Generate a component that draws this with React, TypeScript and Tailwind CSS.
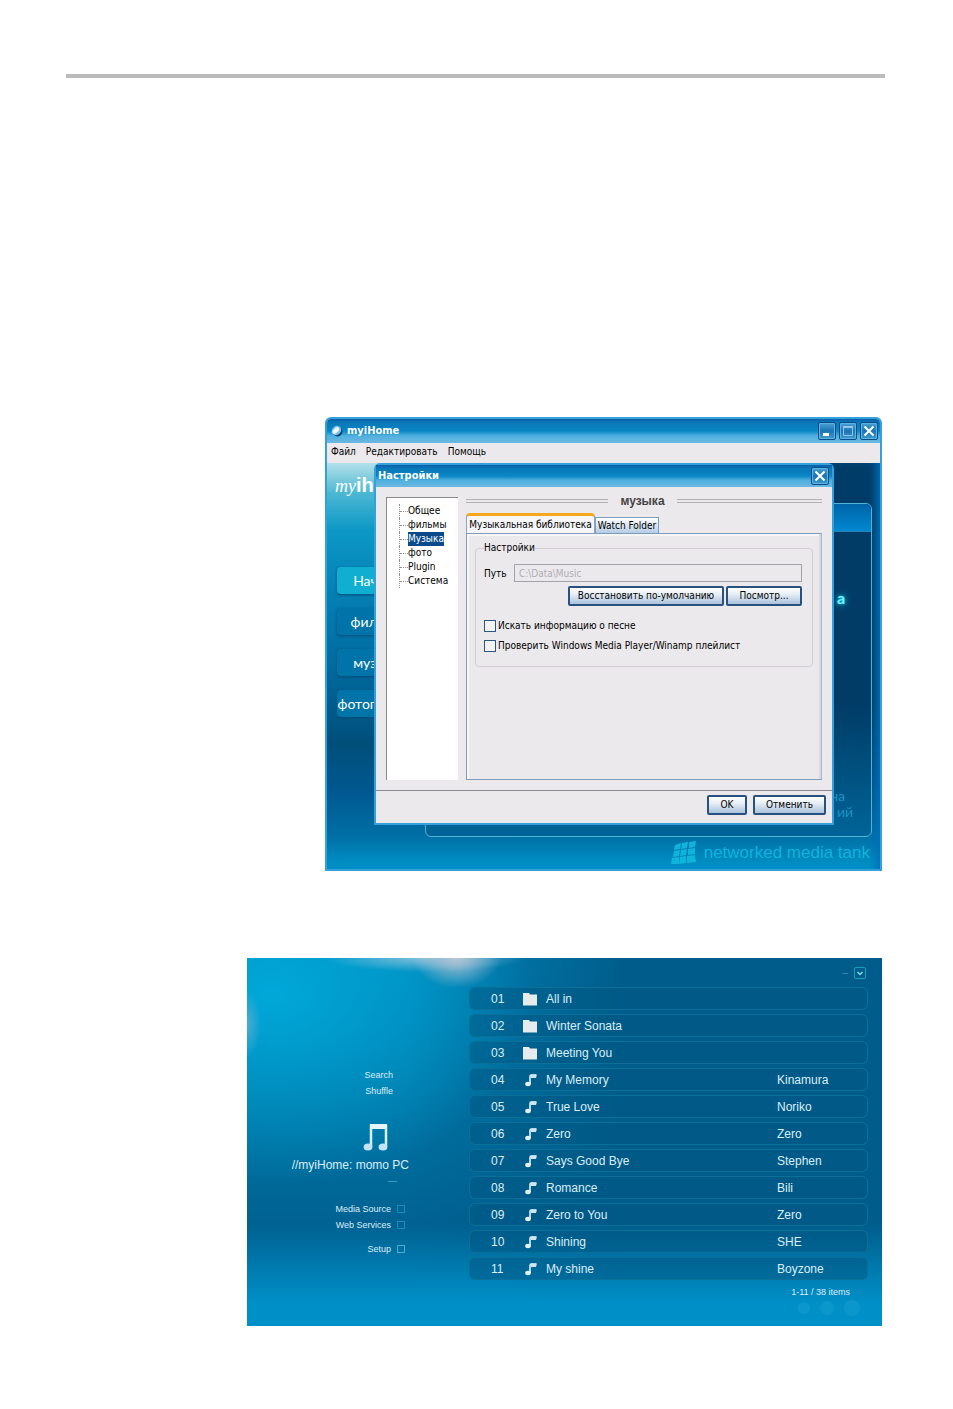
import React from 'react';

interface Track {
  no: string;
  title: string;
  artist?: string;
}

const tracks: Track[] = [
  { no: '01', title: 'All in' },
  { no: '02', title: 'Winter Sonata' },
  { no: '03', title: 'Meeting You' },
  { no: '04', title: 'My Memory', artist: 'Kinamura' },
  { no: '05', title: 'True Love', artist: 'Noriko' },
  { no: '06', title: 'Zero', artist: 'Zero' },
  { no: '07', title: 'Says Good Bye', artist: 'Stephen' },
  { no: '08', title: 'Romance', artist: 'Bili' },
  { no: '09', title: 'Zero to You', artist: 'Zero' },
  { no: '10', title: 'Shining', artist: 'SHE' },
  { no: '11', title: 'My shine', artist: 'Boyzone' },
];

const treeItems = ['Общее', 'фильмы', 'Музыка', 'фото', 'Plugin', 'Система'];
const navItems = ['Начало', 'фильмы', 'музыка', 'фотографии'];

const uiFont = "font-['DejaVu_Sans_Condensed','DejaVu_Sans',sans-serif]";
const titleBar =
  'flex items-center bg-[linear-gradient(#0a5fa8,#0a78b8_15%,#0a86c4_50%,#4fb0de_70%,#6cb8e2)] text-white font-bold';
const captionButton =
  'flex w-[18px] h-[18px] items-center justify-center rounded-xs border border-[#0b4c88] bg-[linear-gradient(#4aa2d4,#1c74b4_50%,#3f9bd0)] shadow-[inset_0_0_0_1px_#5cb4e2]';
const pushButton =
  'h-5 rounded-xs border-2 border-[#29517f] bg-[linear-gradient(#ffffff,#e6edf5_40%,#a9c2dc)] text-[10px] leading-3 text-black whitespace-nowrap';
const checkbox = 'appearance-none w-3 h-3 border border-[#2a5880] bg-[#f3f3f3]';

const MinimizeIcon = () => (
  <svg viewBox="0 0 12 12" className="w-3 h-3">
    <path d="M2 8h6v3H2z" fill="#fff" />
  </svg>
);

const MaximizeIcon = () => (
  <svg viewBox="0 0 12 12" className="w-3 h-3">
    <path d="M1.5 2.5h9v8h-9z" fill="none" stroke="#8fc6ea" />
    <path d="M1 1h10v2H1z" fill="#8fc6ea" />
  </svg>
);

const CloseIcon = () => (
  <svg viewBox="0 0 12 12" className="w-3 h-3">
    <path d="M1.5 1.5l9 9M10.5 1.5l-9 9" stroke="#fff" strokeWidth="2" />
  </svg>
);

const AppIcon = () => (
  <svg viewBox="0 0 12 12" className="w-3 h-3">
    <ellipse cx="6.500" cy="6.500" rx="5" ry="5" fill="#0c3f70" />
    <ellipse cx="5.500" cy="5.500" rx="5" ry="4.400" fill="#7fc3e8" transform="rotate(-40 5.500 5.500)" />
    <ellipse cx="4.800" cy="5.500" rx="4" ry="2.200" fill="#eef9ff" transform="rotate(-45 4.800 5.500)" />
  </svg>
);

const FolderIcon = () => (
  <svg viewBox="0 0 16 14" className="w-4 h-3.5">
    <path d="M1 1h6l1 1.500h7v11H1z" fill="#e6ebee" />
  </svg>
);

const NoteIcon = () => (
  <svg viewBox="0 0 16 14" className="w-4 h-3.5">
    <path d="M8 11V3.500q0-1.500 1.500-1.500H14" fill="none" stroke="#e4f2f8" strokeWidth="1.600" />
    <path d="M9 1.500h6L14 5H9z" fill="#cfe6f0" />
    <ellipse cx="6" cy="11" rx="2.800" ry="2.200" fill="#e4f2f8" />
  </svg>
);

const BigNoteIcon = () => (
  <svg viewBox="0 0 26 28" className="w-6.5 h-7">
    <path d="M8 24V3h15v21" fill="none" stroke="#d8eef8" strokeWidth="2.500" />
    <path d="M7 1h17v5H7z" fill="#e8f6fc" />
    <ellipse cx="5" cy="24" rx="4.400" ry="3.600" fill="#c4e4f6" />
    <ellipse cx="20" cy="24" rx="4.400" ry="3.600" fill="#c4e4f6" />
  </svg>
);

const TankIcon = () => (
  <svg viewBox="0 0 28 24" className="w-7 h-6" fill="#0fb4dc">
    <path d="M5 4l6-2-1 6-6 1zM12 2l6-1-1 6-6 1zM19 1l7-1-1 6-6 1zM4 10l6-1-1 6-6 1zM11 9l6-1-1 6-6 1zM18 8l7-1v6l-7 1zM2 17l7-1v7H1zM10 16l6-1v7l-7 1zM17 15l8-1 1 7-9 1z" />
  </svg>
);

const DoubleRule = ({ className }: { className: string }) => (
  <div className={`h-1 border-y border-[#b4b1b5] ${className}`} />
);

const SettingsDialog: React.FC = () => (
  <div className={`absolute top-0 left-[47px] right-[46px] h-[362px] flex flex-col rounded-t-md border-2 border-[#35a0dc] bg-[#ece9ed] text-[10px] text-black ${uiFont}`}>
    <div className={`${titleBar} h-[22px] pl-0.5 pr-[3px] justify-between`}>
      <h2 className="text-[11px]">Настройки</h2>
      <button type="button" aria-label="Закрыть" className={captionButton}>
        <CloseIcon />
      </button>
    </div>
    <div className="flex-1 flex px-2.5 pt-2.5 pb-2.5">
      <ul className="w-[72px] border-l border-t border-[#8c8a8e] bg-white pl-3 pt-1.5 leading-3.5">
        {treeItems.map((item) => (
          <li key={item} className="flex h-3.5 items-center border-l border-dotted border-[#909090]">
            <span className="w-2 border-t border-dotted border-[#909090]" />
            <span className={item === 'Музыка' ? 'bg-[#0a4a8c] text-white' : ''}>{item}</span>
          </li>
        ))}
      </ul>
      <div className="ml-2 flex-1 flex flex-col">
        <div className="flex items-center h-2">
          <DoubleRule className="w-[142px]" />
          <h3 className="flex-1 text-center font-['Liberation_Sans',sans-serif] text-xs leading-3 font-bold text-[#444]">музыка</h3>
          <DoubleRule className="w-[145px]" />
        </div>
        <div className="flex items-end pt-2">
          <button type="button" className="h-5 w-[129px] rounded-t-sm border-t-3 border-x border-t-[#f5a81c] border-x-[#8aa6c4] bg-[#f6f5f7] whitespace-nowrap">
            Музыкальная библиотека
          </button>
          <button type="button" className="h-4 w-16 border border-b-0 border-[#7c9cc0] bg-[linear-gradient(#fff,#b4cce4)] leading-3 whitespace-nowrap">
            Watch Folder
          </button>
        </div>
        <div className="flex-1 border border-[#7f9cbc] border-r-[#a8b8c8] px-2 py-2 shadow-[inset_-2px_0_#d4dae2,inset_2px_2px_#f6f6f8]">
          <fieldset className="rounded-sm border border-[#d2ced4] pl-2 pr-2.5 pb-3.5">
            <legend className="leading-3">Настройки</legend>
            <div className="flex items-center pt-2.5">
              <label htmlFor="path" className="w-[30px]">Путь</label>
              <input
                id="path"
                disabled
                defaultValue="C:\Data\Music"
                className="h-[18px] min-w-0 flex-1 border border-[#a6a3a8] px-1 text-[#b0adb2]"
              />
            </div>
            <div className="flex justify-end gap-0.5 pt-1">
              <button type="button" className={`${pushButton} w-[156px]`}>Восстановить по-умолчанию</button>
              <button type="button" className={`${pushButton} w-[76px]`}>Посмотр...</button>
            </div>
            <label className="flex items-center gap-0.5 pt-3.5 leading-3">
              <input type="checkbox" className={checkbox} />
              Искать информацию о песне
            </label>
            <label className="flex items-center gap-0.5 pt-2 leading-3">
              <input type="checkbox" className={checkbox} />
              Проверить Windows Media Player/Winamp плейлист
            </label>
          </fieldset>
        </div>
      </div>
    </div>
    <div className="flex h-[33px] justify-end gap-1.5 border-t border-[#8c8890] pr-1.5 pt-1">
      <button type="button" className={`${pushButton} w-10`}>OK</button>
      <button type="button" className={`${pushButton} w-[73px]`}>Отменить</button>
    </div>
  </div>
);

const HomeWindow: React.FC = () => (
  <section className="ml-[259px] mr-[3px] rounded-t-md overflow-hidden border-2 border-[#35a0dc] bg-[#ece9ed]">
    <div className={`${titleBar} h-6 pl-1 pr-0.5`}>
      <AppIcon />
      <h1 className={`flex-1 pl-1 text-[11px] ${uiFont}`}>myiHome</h1>
      <div className="flex gap-[3px]">
        <button type="button" aria-label="Свернуть" className={captionButton}><MinimizeIcon /></button>
        <button type="button" aria-label="Развернуть" className={captionButton}><MaximizeIcon /></button>
        <button type="button" aria-label="Закрыть" className={captionButton}><CloseIcon /></button>
      </div>
    </div>
    <nav className={`flex h-5 items-center gap-2.5 pl-1 pb-1 text-[10px] ${uiFont}`}>
      <a href="#file">Файл</a>
      <a href="#edit">Редактировать</a>
      <a href="#help">Помощь</a>
    </nav>
    <div className="relative flex flex-col bg-[linear-gradient(#003c68,#003a64_60%,#005088_78%,#0070a6_92%,#0094c8)] shadow-[inset_-8px_0_8px_-4px_#0070b8]">
      <div className="flex">
        <div className="w-[98px] pl-2 pt-2 bg-[linear-gradient(#b4e0ea,#4cb8d2_8%,#0c98c6_18%,#0480b4_35%,#006a9e_55%,#004f7a_75%,#005890_88%,#0070a6)]">
          <p className="h-8 whitespace-nowrap text-white">
            <span className="font-['Liberation_Serif',serif] italic text-lg">my</span>
            <span className="font-['Liberation_Sans',sans-serif] font-bold text-xl">ih</span>
          </p>
          <div className="flex flex-col gap-3.5 pt-16 pl-0.5 font-['Lato',sans-serif]">
            {navItems.map((item) => (
              <button
                key={item}
                type="button"
                className="h-[27px] w-20 overflow-hidden rounded-sm bg-[#0074a8] text-sm text-white shadow-[0_1px_3px_#004a74] first:bg-[#10aed0]"
              >
                {item}
              </button>
            ))}
          </div>
        </div>
        <div className="mt-10 mr-2 h-[334px] flex-1 rounded-md border border-[#4fb4d8] bg-[linear-gradient(#003c66,#003c66_60%,#00507e_80%,#006498)] font-['Lato',sans-serif] text-[#1c94c0]">
          <div className="h-7 rounded-t-md border-b border-[#2a86b4] bg-[linear-gradient(#0064a8,#0088d0)]" />
          <p className="mt-14 pr-6.5 text-right text-base leading-5 font-bold text-[#7cf0ff] [text-shadow:0_0_3px_#00d4f8,0_0_8px_#00c4f0]">а</p>
          <p className="mt-45 pr-6.5 text-right text-sm leading-4">на</p>
          <p className="pr-4.5 text-right text-sm leading-4">ий</p>
        </div>
      </div>
      <div className="flex h-8 items-center justify-end gap-1.5 pr-2.5 font-['Liberation_Sans',sans-serif] text-[17px] text-[#0fb4dc]">
        <TankIcon />
        networked media tank
      </div>
      <SettingsDialog />
    </div>
  </section>
);

const cell = 'border-y border-[#0a7098] bg-[#005682]/50 p-0';

const MediaScreen: React.FC = () => (
  <section className="ml-[181px] mr-[3px] flex min-h-[368px] bg-[radial-gradient(ellipse_44px_30px_at_33%_0,#b4c4d4,transparent),radial-gradient(ellipse_100px_14px_at_28%_0,#a4cce0cc,transparent),radial-gradient(ellipse_14px_34px_at_0_18%,#4cacd4,transparent),linear-gradient(transparent_72%,#0090c8_94%),radial-gradient(ellipse_260px_190px_at_4%_10%,#00a8d8,transparent),linear-gradient(90deg,transparent_25%,#005c8a_60%),linear-gradient(#0088bc,#006c9c_55%,#006090_75%)] font-['Liberation_Sans',sans-serif] text-[#dceef6]">
    <div className="flex w-[222px] flex-col items-end pt-[109px] text-[9px] leading-4">
      <a href="#search" className="pr-19">Search</a>
      <a href="#shuffle" className="pr-19">Shuffle</a>
      <div className="pt-6 pr-20"><BigNoteIcon /></div>
      <h2 className="pt-1.5 pr-15 text-xs leading-4">//myiHome: momo PC</h2>
      <span className="pr-18 text-[#6cc0dc]">—</span>
      <a href="#source" className="mt-3 mr-16 flex items-center gap-1.5">
        Media Source
        <span className="w-2 h-2 border border-[#1c8cb4]" />
      </a>
      <a href="#services" className="mr-16 flex items-center gap-1.5">
        Web Services
        <span className="w-2 h-2 border border-[#1c8cb4]" />
      </a>
      <a href="#setup" className="mt-2 mr-16 flex items-center gap-1.5">
        Setup
        <span className="w-2 h-2 border border-[#4cacd0]" />
      </a>
    </div>
    <div className="flex-1 pr-3.5">
      <div className="flex h-[25px] items-end justify-end gap-1.5 pb-1">
        <span className="text-[10px] leading-3 text-[#2c98b8]">–</span>
        <button type="button" aria-label="Меню" className="mr-0.5 flex w-3 h-3 items-center justify-center rounded-xs border border-[#12a0b4]">
          <svg viewBox="0 0 8 8" className="w-2 h-2">
            <path d="M1.500 3L4 5.500 6.500 3" fill="none" stroke="#7fdce8" strokeWidth="1.500" />
          </svg>
        </button>
      </div>
      <table className="w-full border-separate border-spacing-x-0 border-spacing-y-1 text-xs">
        <tbody>
          {tracks.map((track) => (
            <tr key={track.no} className="h-[23px]">
              <td className={`${cell} w-[53px] rounded-l-md border-l pl-[21px]`}>{track.no}</td>
              <td className={`${cell} w-6`}>{track.artist ? <NoteIcon /> : <FolderIcon />}</td>
              <td className={cell}>{track.title}</td>
              <td className={`${cell} w-[91px] rounded-r-md border-r`}>{track.artist}</td>
            </tr>
          ))}
        </tbody>
      </table>
      <p className="pr-4.5 text-right text-[9px] leading-4">1-11 / 38 items</p>
      <svg viewBox="0 0 64 16" className="ml-auto mr-2 h-4 w-16" fill="#3cb4dc" fillOpacity="0.2">
        <circle cx="8" cy="8" r="6" />
        <circle cx="31" cy="8" r="7" />
        <circle cx="56" cy="8" r="8" />
      </svg>
    </div>
  </section>
);

const App: React.FC = () => (
  <main className="min-h-screen bg-white pl-[66px] pr-17 pt-[74px] pb-20">
    <hr className="border-t-4 border-[#bbb]" />
    <div className="flex flex-col gap-[87px] pt-[339px]">
      <HomeWindow />
      <MediaScreen />
    </div>
  </main>
);

export default App;
